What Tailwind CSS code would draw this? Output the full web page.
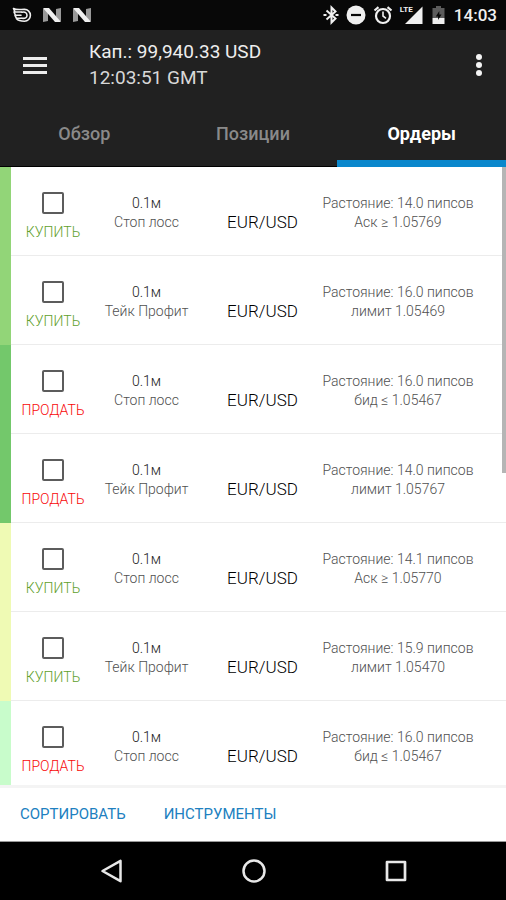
<!DOCTYPE html>
<html lang="ru">
<head>
<meta charset="utf-8">
<meta name="viewport" content="width=device-width, initial-scale=1">
<title>Ордеры</title>
<script src="https://cdn.jsdelivr.net/npm/@tailwindcss/browser@4"></script>
</head>
<body class="flex h-screen flex-col overflow-hidden bg-white font-[Roboto,'Noto_Sans',sans-serif]">

<div class="flex h-[30px] shrink-0 items-center justify-between bg-[#080808] pr-[9px] pl-3 text-[#f0f0f0]">
  <div class="flex items-center gap-[10px]">
    <svg class="h-4 w-5" viewBox="0 0 20 16" fill="none" stroke="currentColor" stroke-width="1.6" stroke-linecap="round" stroke-linejoin="round" aria-hidden="true">
      <path d="M1.500 1.500C4 3.200 8 2.400 12.500 2.400a5.900 5.900 0 0 1 0 11.800C9 14.200 6 13.500 4.500 11.800M1.500 1.500L3 5h6.500M2 5l1.500 3.300h5.500M3 8.300l1.500 3h5"/><path d="M10 5.300c3.200-.8 5 .6 5 3s-1.800 3.400-5 3"/>
    </svg>
    <svg class="h-4 w-5" viewBox="0 0 20 16" aria-hidden="true"><path d="M1 2l5-1v13l-5 1zM14 2l5-1v13l-5 1z" fill="#999"/><path d="M1 1h6l12 14h-6z" fill="currentColor"/></svg>
    <svg class="h-4 w-5" viewBox="0 0 20 16" aria-hidden="true"><path d="M1 2l5-1v13l-5 1zM14 2l5-1v13l-5 1z" fill="#999"/><path d="M1 1h6l12 14h-6z" fill="currentColor"/></svg>
  </div>
  <div class="flex items-center gap-[7px]">
    <svg class="h-5 w-4" viewBox="0 0 16 20" fill="none" stroke="currentColor" stroke-width="2" aria-hidden="true"><path d="M3.500 5.500l9 8-4 4V2.500l4 4-9 8"/><path d="M.5 10h3M12.500 10h3"/></svg>
    <svg class="h-5 w-5" viewBox="0 0 20 20" aria-hidden="true"><circle cx="10" cy="10" r="9.500" fill="currentColor"/><path d="M5 10h10" stroke="#080808" stroke-width="2.200"/></svg>
    <svg class="h-5 w-5" viewBox="0 0 20 20" fill="none" stroke="currentColor" stroke-width="2.200" aria-hidden="true"><circle cx="10" cy="11" r="7"/><path d="M10 6.500V11l3 2.300" stroke-width="1.600"/><path d="M1.500 5.500l4-3.300M18.500 5.500l-4-3.300"/></svg>
    <div class="relative h-5 w-[23px]">
      <svg class="h-5 w-[23px]" viewBox="0 0 23 20" aria-hidden="true"><path d="M22.500 1.500V19H5z" fill="currentColor"/></svg>
      <span class="absolute top-0 left-0 bg-[#080808] pr-px text-[8px] leading-[10px] font-bold">LTE</span>
    </div>
    <svg class="h-5 w-[17px]" viewBox="0 0 17 20" aria-hidden="true"><path d="M6 1h5v2h3.500v10h-12V3H6z" fill="#5c5c5c"/><path d="M2.500 13h12v6h-12z" fill="currentColor"/><path d="M9.300 6L5.800 11.500h2.300V15l3.400-5.500H9.300z" fill="#080808"/></svg>
    <span class="text-[17px] leading-5 font-medium">14:03</span>
  </div>
</div>

<header class="shrink-0 border-b border-black bg-[#212121] text-white">
  <div class="flex h-[70px] items-center justify-between pr-[17px] pl-[23px]">
    <div class="flex items-center gap-[42px]">
      <button type="button" aria-label="Меню" class="flex w-6 flex-col gap-1">
        <span class="h-[3px] w-full bg-[#ededed]"></span><span class="h-[3px] w-full bg-[#ededed]"></span><span class="h-[3px] w-full bg-[#ededed]"></span>
      </button>
      <div class="text-[19px] leading-[26px] text-[#eee]">
        <p>Кап.: 99,940.33 USD</p>
        <p class="text-[#d8d8d8]">12:03:51 GMT</p>
      </div>
    </div>
    <button type="button" aria-label="Ещё" class="flex w-5 flex-col items-center gap-[2px]">
      <span class="size-[6px] rounded-full bg-[#f5f5f5]"></span><span class="size-[6px] rounded-full bg-[#f5f5f5]"></span><span class="size-[6px] rounded-full bg-[#f5f5f5]"></span>
    </button>
  </div>
  <nav class="grid h-[66px] grid-cols-3 text-[18px] font-medium text-[#8a8a8a]">
    <a href="#overview" class="flex items-center justify-center">Обзор</a>
    <a href="#positions" class="flex items-center justify-center">Позиции</a>
    <a href="#orders" aria-current="page" class="relative flex items-center justify-center font-bold text-white">Ордеры<span class="absolute inset-x-0 -bottom-px h-[7px] bg-[#0a87cc]"></span></a>
  </nav>
</header>

<main class="relative min-h-0 flex-1 overflow-hidden">
  <ul id="orders"></ul>
  <div class="absolute top-0 right-0 h-[306px] w-1 bg-[#b5b5b5]"></div>
</main>

<footer class="flex h-[57px] shrink-0 items-center gap-[38px] border-t-[3px] border-b border-t-[#f4f4f4] border-b-[#999] pl-5 text-[15px] text-[#2080c0]">
  <button type="button">СОРТИРОВАТЬ</button>
  <button type="button">ИНСТРУМЕНТЫ</button>
</footer>

<nav class="flex h-[58px] shrink-0 items-center justify-center gap-[118px] bg-black pl-[2px] text-[#e8e8e8]" aria-label="Навигация">
  <button type="button" aria-label="Назад"><svg class="size-6" viewBox="0 0 24 24" fill="none" stroke="currentColor" stroke-width="2.500" stroke-linejoin="round"><path d="M20.500 1.800v20.400L2.500 12z"/></svg></button>
  <button type="button" aria-label="Домой"><svg class="size-6" viewBox="0 0 24 24" fill="none" stroke="currentColor" stroke-width="2.500"><circle cx="12" cy="12" r="10.500"/></svg></button>
  <button type="button" aria-label="Недавние"><svg class="size-6" viewBox="0 0 24 24" fill="none" stroke="currentColor" stroke-width="2.700" stroke-linejoin="round"><rect x="3" y="3" width="18" height="18"/></svg></button>
</nav>

<script>
const buy = ['КУПИТЬ', 'text-[#5fa02c]'], sell = ['ПРОДАТЬ', 'text-[#f80808]'];
const orders = [
  ['bg-[#92d578]', buy, 'Стоп лосс', '14.0', 'Аск ≥ 1.05769'],
  ['bg-[#92d578]', buy, 'Тейк Профит', '16.0', 'лимит 1.05469'],
  ['bg-[#73c86b]', sell, 'Стоп лосс', '16.0', 'бид ≤ 1.05467'],
  ['bg-[#73c86b]', sell, 'Тейк Профит', '14.0', 'лимит 1.05767'],
  ['bg-[#effab4]', buy, 'Стоп лосс', '14.1', 'Аск ≥ 1.05770'],
  ['bg-[#effab4]', buy, 'Тейк Профит', '15.9', 'лимит 1.05470'],
  ['bg-[#c8fccb]', sell, 'Стоп лосс', '16.0', 'бид ≤ 1.05467'],
];
document.getElementById('orders').innerHTML = orders.map(([strip, [side, color], type, distance, price], i) => `
  <li class="flex h-[89px]">
    <div class="w-[11px] shrink-0 ${strip}"></div>
    <div class="grid flex-1 grid-cols-[84fr_103fr_113fr_174fr_21fr] border-b border-[#ececec] text-center text-[14px] leading-[19px] font-light text-[#505050]">
      <div class="flex flex-col items-center pt-[25px]">
        <input type="checkbox" id="order-${i}" class="size-[22px] appearance-none rounded-[2px] border-2 border-[#5c5c5c] checked:bg-[#5c5c5c]">
        <label for="order-${i}" class="mt-[9px] ${color}">${side}</label>
      </div>
      <div class="pt-[27px]"><p class="text-[#222]">0.1м</p><p>${type}</p></div>
      <p class="pt-[46px] pl-4 text-[17px] text-black">EUR/USD</p>
      <div class="pt-[27px] whitespace-nowrap"><p>Растояние: ${distance} пипсов</p><p>${price}</p></div>
    </div>
  </li>`).join('');
</script>
</body>
</html>
